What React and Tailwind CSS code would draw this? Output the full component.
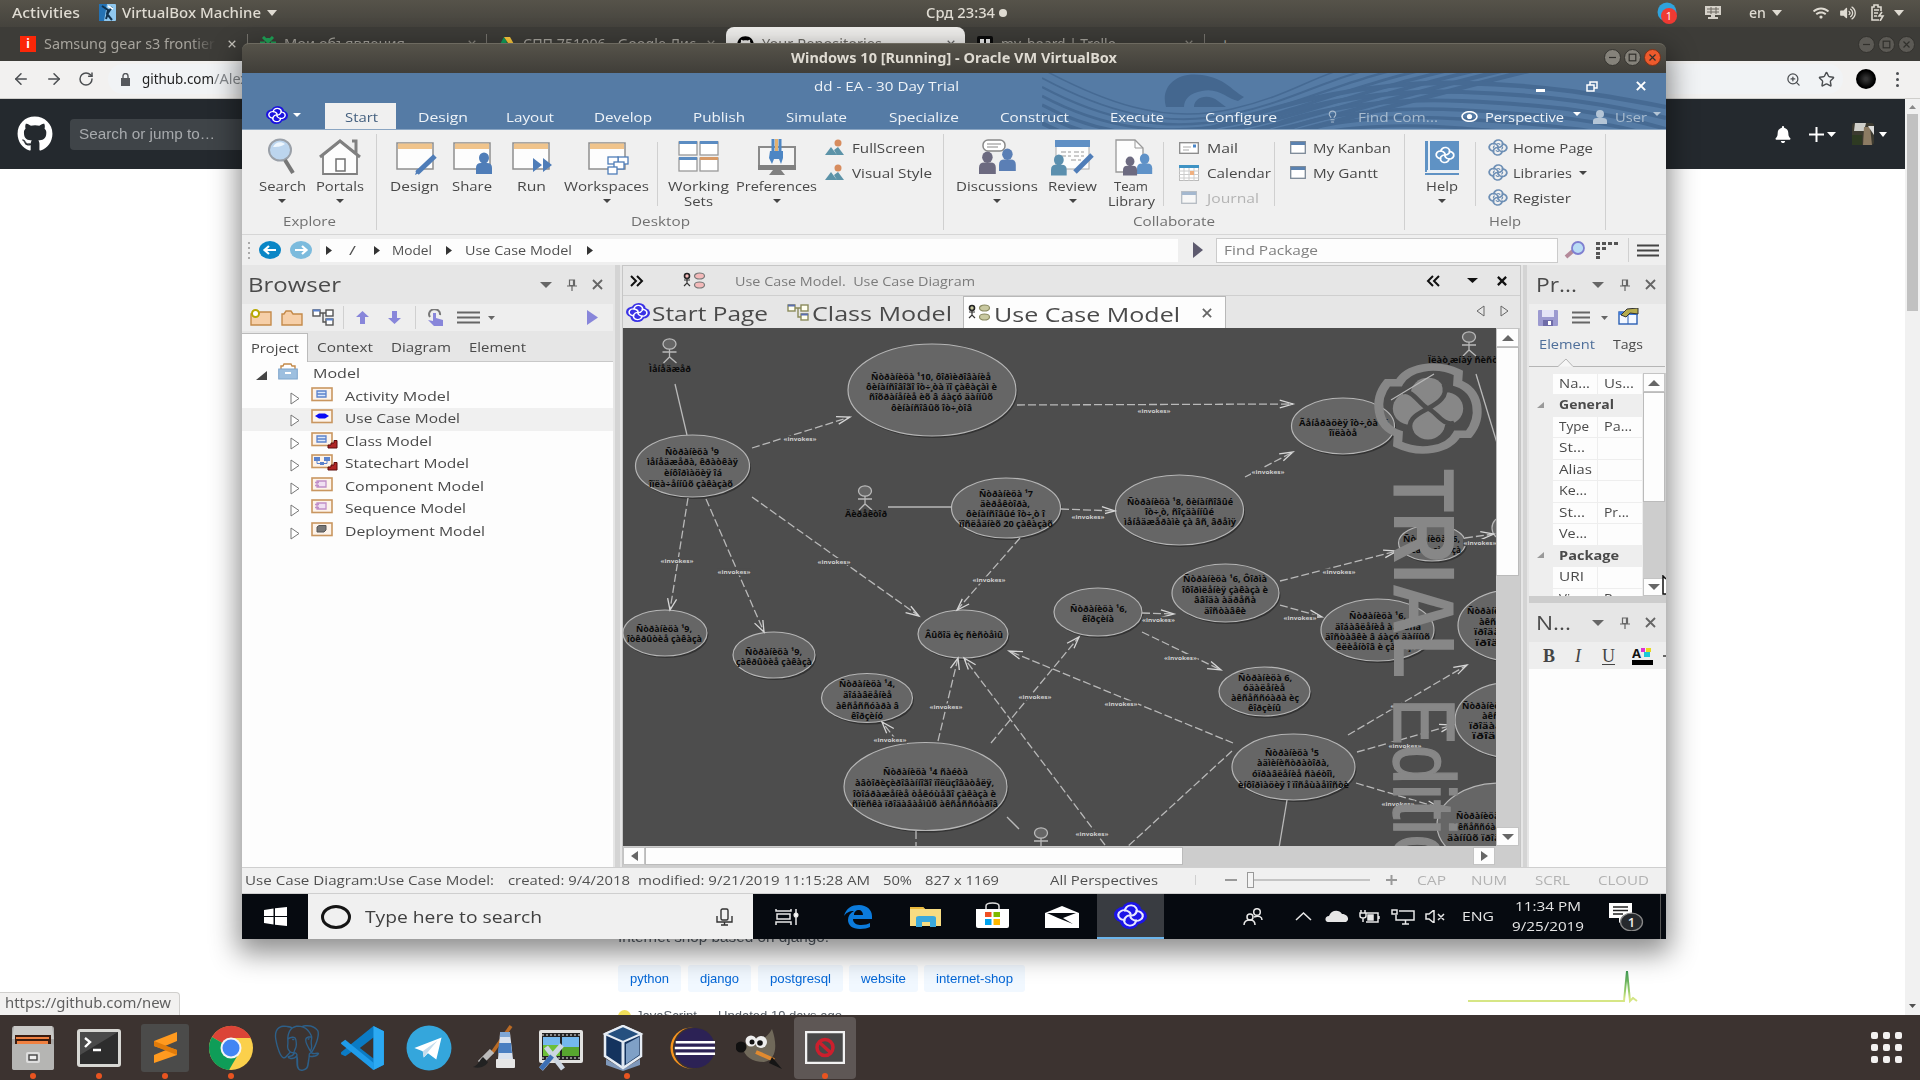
import React, { useLayoutEffect, useRef } from "react";
import { FaGithub, FaBell, FaWifi, FaVolumeUp } from "react-icons/fa";
import { SiPostgresql } from "react-icons/si";
import { ArrowLeft, ArrowRight, RotateCw, Star, ZoomIn, Lightbulb } from "lucide-react";

/* Text stretched or condensed horizontally to an exact width. */
function Fit({ w, className = "", children }) {
  const ref = useRef(null);
  useLayoutEffect(() => {
    const el = ref.current;
    el.style.transform = "none";
    const natural = el.getBoundingClientRect().width;
    if (natural > 0) el.style.transform = `scaleX(${w / natural})`;
  }, [w, children]);
  return (
    <span className={"block shrink-0 whitespace-pre " + className} style={{ width: w }}>
      <span ref={ref} className="inline-block origin-left whitespace-pre">{children}</span>
    </span>
  );
}

function Tri({ dir = "down", w = 9, h = 5, fill = "#444", stroke = "none", className = "" }) {
  const d = {
    down: "M0 0H10L5 10Z",
    up: "M0 10H10L5 0Z",
    right: "M0 0V10L10 5Z",
    left: "M10 0V10L0 5Z",
    corner: "M10 0V10H0Z",
  }[dir];
  return (
    <svg width={w} height={h} viewBox="0 0 10 10" preserveAspectRatio="none" className={"shrink-0 overflow-visible " + className}>
      <path d={d} fill={fill} stroke={stroke} vectorEffect="non-scaling-stroke" />
    </svg>
  );
}

const quarter = [0, 90, 180, 270];
function Knot({ size = 22, h, color = "#1a12e0", inner = "#fff", className = "" }) {
  return (
    <svg width={size} height={h || size} viewBox="-50 -50 100 100" preserveAspectRatio="none" className={"shrink-0 " + className}>
      <g fill={color}>
        {quarter.map((a) => <circle key={a} r="29" cx="3" cy="-21" transform={`rotate(${a})`} />)}
      </g>
      <g fill="none" stroke={inner} strokeWidth="6.500">
        {quarter.map((a) => <path key={a} transform={`rotate(${a})`} d="M-16 -15A18 18 0 1 1 18 -12C14 -4 8 2 0 0" />)}
      </g>
    </svg>
  );
}

function LineKnot({ className = "" }) {
  return (
    <svg width="20" height="17" viewBox="-50 -50 100 100" preserveAspectRatio="none" className={"shrink-0 " + className}>
      <g fill="none" stroke="#6d8fb5" strokeWidth="9">
        {quarter.map((a) => <path key={a} transform={`rotate(${a})`} d="M-20 -18A22 22 0 1 1 20 -10C14 -2 8 2 0 0" />)}
        {quarter.map((a) => <path key={a} transform={`rotate(${a})`} d="M-4 -22A10 9 0 0 1 10 -16" strokeWidth="6" />)}
      </g>
    </svg>
  );
}

function WinBtn({ kind, dim }) {
  const bg = kind === "x" && !dim ? "bg-[#ee5a2c] border-[#7c3117]" : dim ? "bg-[#5c5a55] border-[#33322e]" : "bg-[#85827a] border-[#35342f]";
  return (
    <div className={"h-[17px] w-[17px] shrink-0 rounded-full border flex items-center justify-center " + bg}>
      <svg width="9" height="9" viewBox="0 0 9 9" fill="none" stroke="#31302c" strokeWidth="1.2">
        {kind === "-" && <path d="M1 4.5H8" />}
        {kind === "o" && <rect x="1.2" y="1.2" width="6.6" height="6.6" />}
        {kind === "x" && <path d="M1.5 1.5L7.5 7.5M7.5 1.5L1.5 7.5" />}
      </svg>
    </div>
  );
}

const X = ({ s = 9, c = "#555", sw = 1.8, className = "" }) => (
  <svg width={s} height={s} viewBox="0 0 9 9" fill="none" stroke={c} strokeWidth={sw} className={"shrink-0 " + className}>
    <path d="M.8 .8L8.2 8.2M8.2 .8L.8 8.2" />
  </svg>
);
const Pin = ({ className = "" }) => (
  <svg width="10" height="12" viewBox="0 0 10 12" fill="none" stroke="#666" strokeWidth="1.2" className={"shrink-0 " + className}>
    <path d="M2.5 1H7.5V6.5H2.5ZM6.5 1V6.5M0 7H10M5 7V12" />
  </svg>
);
const Burger = ({ w = 22, c = "#555", className = "" }) => (
  <svg width={w} height="13" viewBox="0 0 22 13" preserveAspectRatio="none" className={"shrink-0 " + className}>
    <path d="M0 1.5H22M0 6.5H22M0 11.5H22" stroke={c} strokeWidth="2" />
  </svg>
);
const VLine = ({ className = "" }) => <div className={"w-px shrink-0 bg-[#d0d0d0] " + className} />;

/* ------------------------------ desktop ------------------------------ */
function TopBar() {
  return (
    <div className="flex h-[27px] shrink-0 items-center bg-linear-to-b from-[#56534a] to-[#45433d] pb-[2px] font-['Noto_Sans',sans-serif] text-[14px] leading-[20px] font-medium text-[#dfdbd2]">
      <Fit w={68} className="ml-[12px]">Activities</Fit>
      <svg width="17" height="17" viewBox="0 0 17 17" className="ml-[19px] shrink-0">
        <rect width="17" height="17" rx="1" fill="#8fc7ee" />
        <path d="M0 0H8L5 17H0Z" fill="#2472b4" /><path d="M3 2L9 6L8 10L13 16M13 3L9 9L7 15" stroke="#10324f" strokeWidth="2" fill="none" />
        <path d="M9 2L14 5" stroke="#fff" strokeWidth="1.5" />
      </svg>
      <Fit w={139} className="ml-[6px]">VirtualBox Machine</Fit>
      <Tri className="ml-[6px]" w={10} h={6} fill="#dfdbd2" />
      <Fit w={69} className="ml-[649px]">Срд 23:34</Fit>
      <div className="ml-[4px] h-[8px] w-[8px] shrink-0 rounded-full bg-[#dfdbd2]" />
      <svg width="22" height="22" viewBox="0 0 22 22" className="ml-[650px] shrink-0">
        <circle cx="10" cy="10" r="9.5" fill="#2fa3dd" /><circle cx="12" cy="14" r="8" fill="#ef3a33" />
        <text x="12" y="18" fontSize="11" textAnchor="middle" fill="#fff" fontFamily="Open Sans">1</text>
      </svg>
      <svg width="16" height="13" viewBox="0 0 16 13" className="ml-[26px] shrink-0">
        <path d="M0 0H16V9H0ZM6 9H10V11H13V13H3V11H6Z" fill="#d5d1c9" /><path d="M2 3H14M2 6H14M6 1V8M11 1V8" stroke="#6a675f" />
      </svg>
      <Fit w={17} className="ml-[28px]">en</Fit>
      <Tri className="ml-[6px]" w={10} h={6} fill="#dfdbd2" />
      <FaWifi className="ml-[31px] h-[14px] w-[16px] shrink-0" />
      <FaVolumeUp className="ml-[11px] h-[14px] w-[16px] shrink-0" />
      <svg width="15" height="17" viewBox="0 0 15 17" className="ml-[14px] shrink-0" fill="none" stroke="#dfdbd2" strokeWidth="1.6">
        <path d="M9 16H2V3H4V1H8V3H11V7" /><path d="M4 6H9M4 9H8M4 12H7" /><path d="M12 8L9 12H13L10 17" />
      </svg>
      <Tri className="ml-[9px]" w={10} h={6} fill="#dfdbd2" />
    </div>
  );
}

function TabStrip() {
  return (
    <div className="flex h-[34px] shrink-0 items-center bg-[#3d3c38] font-['Noto_Sans',sans-serif] text-[13.5px] leading-[20px] text-[#a7a49d]">
      <div className="ml-[20px] flex h-[16px] w-[16px] shrink-0 items-center justify-center bg-[#fb2708] text-[12px] font-bold text-white">i</div>
      <div className="ml-[8px] w-[172px] shrink-0 overflow-hidden mask-r-from-85% mask-r-to-100%"><Fit w={171}>Samsung gear s3 frontier</Fit></div>
      <X s={8} c="#c6c3bc" sw={1.4} className="ml-[12px]" />
      <VLine className="ml-[11px] h-[20px] bg-[#77746e]!" />
      <svg width="16" height="16" viewBox="0 0 16 16" className="ml-[12px] shrink-0"><path d="M3 1L8 6L13 1M0 7H5M11 7H16M8 2V14M3 13L8 8L13 13" stroke="#1fa558" strokeWidth="3" fill="none" /></svg>
      <Fit w={121} className="ml-[8px]">Мои объявления</Fit>
      <X s={8} c="#8a877f" sw={1.4} className="ml-[63px]" />
      <VLine className="ml-[10px] h-[20px] bg-[#77746e]!" />
      <svg width="16" height="15" viewBox="0 0 16 15" className="ml-[12px] shrink-0"><path d="M5 0L0 9L3 14L8 5Z" fill="#12a05c" /><path d="M5 0H11L16 9H11Z" fill="#fdc93c" /><path d="M3 14L5.5 9H16L13 14Z" fill="#4a87ee" /></svg>
      <Fit w={173} className="ml-[8px]">СПП 751006 - Google Дис</Fit>
      <X s={8} c="#8a877f" sw={1.4} className="ml-[11px]" />
      <div className="ml-[11px] flex h-full w-[239px] shrink-0 items-center rounded-t-[8px] bg-[#f0efed] text-[#6d6b66]">
        <FaGithub className="ml-[11px] h-[17px] w-[17px] shrink-0 text-black" />
        <Fit w={120} className="ml-[8px]">Your Repositories</Fit>
        <X s={8} c="#666" sw={1.4} className="ml-[65px]" />
      </div>
      <svg width="16" height="16" viewBox="0 0 16 16" className="ml-[12px] shrink-0"><rect width="16" height="16" rx="2" fill="#0a0a0a" /><path d="M3 3H7V13H3ZM9 3H13V9H9Z" fill="#eee" /></svg>
      <Fit w={115} className="ml-[8px]">my_board | Trello</Fit>
      <X s={8} c="#8a877f" sw={1.4} className="ml-[69px]" />
      <VLine className="ml-[11px] h-[20px] bg-[#77746e]!" />
      <span className="ml-[15px] text-[18px]">+</span>
      <div className="ml-auto flex gap-[3px] pr-[5px]"><WinBtn kind="-" dim /><WinBtn kind="o" dim /><WinBtn kind="x" dim /></div>
    </div>
  );
}

function AddressBar() {
  return (
    <div className="flex h-[38px] shrink-0 items-center border-b border-[#cfcecb] bg-[#f2f1f0] pb-px text-[#4b4e51]">
      <ArrowLeft size={18} strokeWidth={2} className="ml-[12px] shrink-0" />
      <ArrowRight size={18} strokeWidth={2} className="ml-[15px] shrink-0" />
      <RotateCw size={16} strokeWidth={2.2} className="ml-[15px] shrink-0" />
      <div className="ml-[14px] flex h-[30px] w-[1735px] shrink-0 items-center rounded-full bg-[#f1f3f5] font-['Noto_Sans',sans-serif] text-[14px] leading-[20px]">
        <svg width="9" height="13" viewBox="0 0 9 13" className="ml-[13px] shrink-0"><path d="M0 5H9V13H0Z" fill="#55585c" /><path d="M2 6V3A2.5 2.5 0 0 1 7 3V6" fill="none" stroke="#55585c" strokeWidth="1.4" /></svg>
        <Fit w={72} className="ml-[12px] text-[#222]">github.com</Fit>
        <Fit w={34} className="text-[#85888c]">/Alex</Fit>
        <ZoomIn size={15} className="mr-[17px] ml-auto" />
        <Star size={17} className="mr-[8px]" />
      </div>
      <div className="ml-[13px] h-[20px] w-[20px] shrink-0 rounded-full bg-[radial-gradient(circle,#333_10%,#000_60%)]" />
      <div className="ml-[20px] flex flex-col gap-[3px]">
        <i className="block h-[3px] w-[3px] rounded-full bg-[#4b4e51]" /><i className="block h-[3px] w-[3px] rounded-full bg-[#4b4e51]" /><i className="block h-[3px] w-[3px] rounded-full bg-[#4b4e51]" />
      </div>
    </div>
  );
}

function GithubPage() {
  return (
    <div className="flex h-[916px] shrink-0">
      <div className="flex w-[1905px] flex-col bg-white">
        <div className="flex h-[70px] shrink-0 items-center bg-[#24292e]">
          <FaGithub className="ml-[17px] h-[36px] w-[36px] shrink-0 text-white" />
          <div className="ml-[17px] flex h-[31px] w-[300px] shrink-0 items-center rounded-[4px] bg-[#3f4448] font-['Liberation_Sans',sans-serif] text-[15px] text-[#a7aaad]">
            <Fit w={136} className="ml-[9px]">Search or jump to…</Fit>
          </div>
          <FaBell className="ml-auto h-[17px] w-[16px] text-white" />
          <svg width="15" height="15" viewBox="0 0 15 15" className="ml-[18px]"><path d="M7.5 0V15M0 7.5H15" stroke="#fff" strokeWidth="2" /></svg>
          <Tri className="ml-[3px]" w={9} h={5} fill="#fff" />
          <svg width="22" height="22" viewBox="0 0 22 22" className="ml-[16px]"><rect width="22" height="22" rx="3" fill="#3c3a30" /><path d="M3 0H14L12 8H2Z" fill="#cfcfca" /><path d="M12 4H18L20 22H11Z" fill="#8c7b63" /><path d="M0 12H10V22H0Z" fill="#2e3a22" /><path d="M16 3H22V12Z" fill="#ddd" /></svg>
          <Tri className="mr-[18px] ml-[5px]" w={8} h={5} fill="#fff" />
        </div>
        <div className="mt-[758px] flex h-[20px] shrink-0 items-center pl-[618px] font-['Liberation_Sans',sans-serif] text-[14px] text-[#586069]">
          <Fit w={211}>Internet shop based on django.</Fit>
        </div>
        <div className="mt-[18px] flex h-[27px] shrink-0 items-center pl-[618px] font-['Liberation_Sans',sans-serif] text-[13px] text-[#0366d6]">
          {[["python", 63, 39, ""], ["django", 63, 39, "ml-[7px]"], ["postgresql", 85, 61, "ml-[7px]"], ["website", 69, 45, "ml-[6px]"], ["internet-shop", 101, 77, "ml-[6px]"]].map(([t, w, tw, m]) => (
            <div key={t} className={"flex h-[27px] items-center justify-center rounded-[3px] bg-[#f1f8ff] " + m} style={{ width: w }}><Fit w={tw}>{t}</Fit></div>
          ))}
          <svg width="170" height="36" viewBox="0 0 170 36" className="ml-[443px] shrink-0 translate-y-[7px]">
            <defs><linearGradient id="spark" gradientUnits="userSpaceOnUse" x1="0" y1="34" x2="0" y2="2"><stop offset="0.1" stopColor="#d6e685" /><stop offset="0.4" stopColor="#8cc665" /><stop offset="1" stopColor="#3d9a55" /></linearGradient></defs>
            <path d="M0 33.010H156L159 3L162 33L165 30L169 33" fill="none" stroke="url(#spark)" strokeWidth="2" />
          </svg>
        </div>
        <div className="flex min-h-0 flex-1 overflow-hidden">
          <div className="flex h-[24px] w-[180px] shrink-0 items-center rounded-tr-[4px] border-t border-r border-[#d0cfcd] bg-[#f2f1f0] pb-[4px] font-['Noto_Sans',sans-serif] text-[14px] leading-[18px] text-[#5f5f5f]"><Fit w={166} className="ml-[5px]">https://github.com/new</Fit></div>
          <div className="mt-[16px] ml-[438px] flex h-[16px] items-center font-['Liberation_Sans',sans-serif] text-[13px] leading-[16px] text-[#586069]">
            <i className="block h-[13px] w-[13px] shrink-0 rounded-full bg-[#f1e05a]" />
            <Fit w={61} className="ml-[5px]">JavaScript</Fit>
            <Fit w={124} className="ml-[21px]">Updated 19 days ago</Fit>
          </div>
        </div>
      </div>
      <div className="flex w-[15px] flex-col items-center bg-[#f1f1f1]">
        <Tri dir="up" w={7} h={4} fill="#8a8a8a" className="mt-[6px]" />
        <div className="mt-[5px] h-[197px] w-[11px] bg-[#c1c1c1]" />
        <Tri w={7} h={4} fill="#505050" className="mt-auto mb-[7px]" />
      </div>
    </div>
  );
}

/* ------------------------------ dock ------------------------------ */
const dockIcons = [
  <svg key="files" viewBox="0 0 44 46"><rect x="1" y="1" width="42" height="44" rx="3" fill="#a9a9a7" /><path d="M3 1H41L43 14H1Z" fill="#c9c9c7" /><rect x="4" y="10" width="36" height="9" fill="#3a1c10" /><path d="M5 12H38V14H5ZM6 16H37V19H6Z" fill="#f08040" /><rect x="1" y="19" width="42" height="26" rx="2" fill="#b5b5b3" /><rect x="15" y="27" width="14" height="11" rx="2" fill="#ddd" /><rect x="18" y="30" width="8" height="5" fill="#eee" stroke="#444" strokeWidth="1.4" /></svg>,
  <svg key="term" viewBox="0 0 46 42"><rect x="1" y="2" width="44" height="38" rx="3" fill="#d8d8d4" /><rect x="4" y="5" width="38" height="32" fill="#2d2d2d" /><path d="M4 5H42L4 28Z" fill="#4a4a4a" /><path d="M9 11L14 15L9 20M17 23H25" stroke="#fff" strokeWidth="2.4" fill="none" /></svg>,
  <div key="subl" className="flex h-[48px] w-[48px] items-center justify-center rounded-[3px] bg-[#4b4b4a]"><svg width="25" height="33" viewBox="0 0 25 33"><path d="M1 10L24 1V10L12 15L24 19V24L1 32V24L13 19L1 15Z" fill="#ff9a1f" /><path d="M1 15L1 10L24 19V24Z" fill="#e07b0a" /></svg></div>,
  <svg key="chrome" viewBox="0 0 46 46"><circle cx="23" cy="23" r="22" fill="#fbd04b" /><path d="M23 23L4 12A22 22 0 0 1 43 13H23Z" fill="#db4437" /><path d="M23 23L4 12A22 22 0 0 0 21 45L31 28Z" fill="#0f9d58" /><circle cx="23" cy="23" r="10.500" fill="#f5f5f5" /><circle cx="23" cy="23" r="8.500" fill="#4285f4" /></svg>,
  <SiPostgresql key="pg" className="text-[#2d5f88]" />,
  <svg key="code" viewBox="0 0 44 44"><path d="M32 1L42 6V38L32 43L12 25L5 30L1 28V26L32 1Z" fill="#0b7bc4" /><path d="M1 17L5 14L32 36V43L1 18Z" fill="#1f9cea" /><path d="M32 12V32L19 22Z" fill="#3c3330" /><path d="M32 1L42 6V38L32 43Z" fill="#2ca9f2" /></svg>,
  <svg key="tg" viewBox="0 0 44 44"><circle cx="22" cy="22" r="21.500" fill="#34a6dc" /><path d="M8 22L34 12L29 33L21 27L17 31L16 25Z" fill="#fff" /><path d="M16 25L30 15L20 27L17 31Z" fill="#c4dcec" /></svg>,
  <svg key="paint" viewBox="0 0 46 46"><path d="M39 1L20 28" stroke="#b96a24" strokeWidth="3.500" /><path d="M20 26L8 38" stroke="#bbb" strokeWidth="6" /><path d="M11 32C8 34 6 41 1 42C8 44 14 41 16 37Z" fill="#222" /><path d="M28 8H38L41 34H26Z" fill="#d9e2ee" /><path d="M27 18H39L40 28H26Z" fill="#4a7fc1" /><rect x="24" y="34" width="19" height="9" rx="1" fill="#e6e6e6" /><path d="M28 7H38V12H28Z" fill="#7fa6d4" /></svg>,
  <svg key="edit" viewBox="0 0 46 46"><rect x="1" y="5" width="44" height="33" rx="2" fill="#e2e2e0" /><rect x="4" y="8" width="38" height="27" fill="#222" /><path d="M5 12H22V31H5Z" fill="#6cbf38" /><path d="M24 12H41V31H24Z" fill="#57a62f" /><path d="M5 12H22V20H5ZM24 12H41V22H24Z" fill="#74b8ee" /><path d="M4 10H42M4 33H42" stroke="#eee" strokeDasharray="2 2" /><path d="M3 44L24 20M8 22L25 44" stroke="#ccd6e2" strokeWidth="5" /><path d="M3 44L14 31" stroke="#3c6fb4" strokeWidth="5" /></svg>,
  <svg key="vbox" viewBox="0 0 42 46" className="-translate-x-[4px]"><path d="M4 34L21 44L38 34V40L21 46L4 40Z" fill="#7f98ba" /><path d="M21 1L39 9V31L21 43L3 31V9Z" fill="#14335e" stroke="#e6edf5" strokeWidth="2.500" /><path d="M3 9L21 17L39 9L21 1Z" fill="#25507f" stroke="#e6edf5" strokeWidth="2" /><path d="M21 17V43" stroke="#dfe8f2" strokeWidth="3" /><path d="M24 19L37 12V30L24 39Z" fill="#7fa0c6" /></svg>,
  <svg key="ecl" viewBox="0 0 48 46"><circle cx="22" cy="23" r="21.500" fill="#f7941e" /><circle cx="25" cy="23" r="22" fill="#3c3330" /><circle cx="26" cy="23" r="21" fill="#2c2255" /><path d="M6 17H47M5 23H47M6 29H47" stroke="#fff" strokeWidth="2.600" /></svg>,
  <svg key="gimp" viewBox="0 0 46 44"><path d="M12 14C20 18 30 14 36 3C42 20 40 34 28 36C16 36 8 30 7 22Z" fill="#70695a" /><circle cx="5" cy="21" r="5.500" fill="#111" /><circle cx="15" cy="15" r="5.500" fill="#eee" /><circle cx="25" cy="16" r="6" fill="#eee" /><circle cx="16" cy="16" r="2.500" fill="#111" /><circle cx="24" cy="17" r="2.800" fill="#111" /><path d="M20 26L38 34" stroke="#e08a30" strokeWidth="4" /><path d="M36 31L46 43L33 37Z" fill="#151515" /></svg>,
  <div key="no" className="flex h-[62px] w-[62px] shrink-0 items-center justify-center rounded-[4px] bg-[#5e5755]"><svg width="40" height="33" viewBox="0 0 40 33"><rect x="1" y="1" width="38" height="31" fill="#484848" stroke="#f2f2f2" strokeWidth="2.500" /><circle cx="20" cy="16.500" r="8" fill="none" stroke="#cc1f2d" strokeWidth="3.500" /><path d="M14 11L26 22" stroke="#cc1f2d" strokeWidth="3.500" /></svg></div>,
];
const running = [0, 1, 2, 3, 9, 12];
function Dock() {
  return (
    <div className="flex h-[65px] shrink-0 items-center bg-[#3c3330]">
      {dockIcons.map((ic, i) => (
        <div key={i} className="relative flex h-[65px] w-[66px] shrink-0 items-center justify-center [&>svg]:h-[46px] [&>svg]:w-[46px]">
          {ic}
          {running.includes(i) && <i className="absolute bottom-[1px] left-[30px] block h-[6px] w-[6px] rounded-full bg-[#e95420]" />}
        </div>
      ))}
      <div className="mr-[18px] ml-auto grid grid-cols-3 gap-[5px]">
        {[0, 1, 2, 3, 4, 5, 6, 7, 8].map((i) => <i key={i} className="block h-[7px] w-[7px] rounded-[2px] bg-[#f3f1f0]" />)}
      </div>
    </div>
  );
}

/* ------------------------------ EA header ------------------------------ */
function Swirls() {
  return (
    <svg className="absolute top-0 right-0" width="624" height="57" viewBox="0 0 624 57">
      <g fill="none" stroke="#466a93">
        {[0, 1, 2, 3, 4, 5, 6, 7].map((i) => (
          <path key={i} strokeWidth={1.5 + i * 0.45} d={`M0 ${-4 + i * 9}C60 ${28 + i * 9} 120 ${52 + i * 4} 190 ${36 + i * 5}S${280 + i * 18} ${-6 + i * 3} ${330 + i * 26} -8`} />
        ))}
        {[0, 1, 2, 3, 4, 5].map((i) => (
          <path key={"b" + i} strokeWidth={4.5 - i * 0.3} d={`M${150 + i * 30} ${62}C250 ${26 + i * 7} 330 ${8 + i * 8} 420 ${10 + i * 9}S570 ${24 + i * 8} 624 ${34 + i * 11}`} />
        ))}
      </g>
      <path d="M124 34C118 14 134 -2 160 2C184 6 188 16 202 24L196 28C186 26 176 14 160 18C148 20 142 26 142 34ZM152 34C152 24 166 20 176 28L184 34Z" fill="#44678f" />
    </svg>
  );
}
const menuTabs = [["Design", 50, "ml-[22px]"], ["Layout", 48, "ml-[38px]"], ["Develop", 58, "ml-[40px]"], ["Publish", 52, "ml-[41px]"], ["Simulate", 61, "ml-[41px]"], ["Specialize", 70, "ml-[42px]"], ["Construct", 69, "ml-[41px]"], ["Execute", 54, "ml-[41px]"], ["Configure", 72, "ml-[41px]"]];
function AppHeader() {
  return (
    <div className="relative h-[57px] shrink-0 overflow-hidden border-b border-[#8aa5c2] bg-[#557ba5] text-[13px] leading-[18px] text-[#eef3f8]">
      <Swirls />
      <div className="relative flex h-[30px] items-center">
        <Fit w={145} className="ml-[572px] -translate-y-[2px]">dd - EA - 30 Day Trial</Fit>
        <div className="mt-[4px] ml-[577px] h-[3px] w-[9px] shrink-0 bg-white" />
        <svg width="12" height="11" viewBox="0 0 12 11" className="mb-[4px] ml-[41px] shrink-0" fill="none" stroke="#fff" strokeWidth="1.5"><path d="M1 4H8V10H1ZM4 4V1H11V7H8" /></svg>
        <X s={10} c="#fff" className="mb-[4px] ml-[38px]" />
      </div>
      <div className="relative flex h-[27px] items-center">
        <Knot size={22} h={18} className="mb-[4px] ml-[24px]" />
        <Tri className="mb-[4px] ml-[5px]" w={8} h={4} fill="#fff" />
        <div className="ml-[24px] flex h-[27px] w-[71px] shrink-0 items-center justify-center bg-[#f0f0f0] pl-[2px] text-[#44607f]"><Fit w={33}>Start</Fit></div>
        {menuTabs.map(([t, w, m]) => <Fit key={t} w={w} className={m}>{t}</Fit>)}
        <Lightbulb className="ml-[49px] h-[15px] w-[13px] shrink-0 text-[#a9bccf]" />
        <Fit w={80} className="ml-[19px] text-[#a9bccf]">Find Com...</Fit>
        <svg width="17" height="11" viewBox="0 0 17 11" className="ml-[23px] shrink-0"><ellipse cx="8.500" cy="5.500" rx="7.500" ry="4.800" fill="none" stroke="#fff" strokeWidth="1.600" /><circle cx="8.500" cy="5.500" r="2.600" fill="#fff" /></svg>
        <Fit w={79} className="ml-[7px]">Perspective</Fit>
        <Tri className="mb-[6px] ml-[9px]" w={8} h={4} fill="#fff" />
        <svg width="16" height="14" viewBox="0 0 16 14" className="ml-[11px] shrink-0" fill="#b4c5d6"><circle cx="8" cy="4" r="4" /><path d="M1 14V11Q1 8 5 8H11Q15 8 15 11V14Z" /></svg>
        <Fit w={32} className="ml-[7px] text-[#a9bccf]">User</Fit>
        <Tri className="mb-[6px] ml-[6px]" w={8} h={4} fill="#b4c5d6" />
      </div>
    </div>
  );
}

/* ------------------------------ ribbon ------------------------------ */
const Person = ({ x, y, c, s = 1 }) => (
  <g transform={`translate(${x} ${y}) scale(${s})`} fill={c}><ellipse cx="8" cy="5" rx="5" ry="5.500" /><path d="M0 21V15Q0 10 5 10H11Q16 10 16 15V21Z" /></g>
);
const WinFrame = ({ children }) => (
  <svg width="44" height="36" viewBox="0 0 44 36" className="translate-x-[2px]"><rect x="2" y="4" width="36" height="26" fill="#fdfdfd" stroke="#8e8e8e" strokeWidth="1.500" /><path d="M3 4.500H37V10H3Z" fill="#f0c48c" />{children}</svg>
);
const B = "#4f7db8";
const icons = {
  search: <svg width="30" height="38" viewBox="0 0 30 38"><ellipse cx="13" cy="12" rx="11" ry="10.500" fill="#bcd5ee" stroke="#9aa0a8" strokeWidth="2" /><path d="M6 9C8 4 14 3 18 6C14 9 9 9 6 9Z" fill="#eef6fd" /><path d="M18 22L26 35" stroke="#777" strokeWidth="4" /></svg>,
  house: <svg width="42" height="38" viewBox="0 0 42 38"><path d="M4 17V36H38V17L21 3Z" fill="#fdfdfd" stroke="#808080" strokeWidth="1.800" /><path d="M1 19L21 3L41 19M33 3H37V15" fill="none" stroke="#808080" strokeWidth="3" /><rect x="17" y="21" width="9" height="12" fill="#fff" stroke="#707070" strokeWidth="1.500" /></svg>,
  design: <WinFrame><path d="M22 34L40 17" stroke={B} strokeWidth="5" /><path d="M20 36L22 30L26 33Z" fill={B} /></WinFrame>,
  share: <WinFrame><Person x="24" y="14" c={B} /></WinFrame>,
  run: <WinFrame><path d="M22 19L31 26L22 33ZM32 19L41 26L32 33Z" fill={B} /></WinFrame>,
  workspaces: <WinFrame><g fill="#fff" stroke={B} strokeWidth="1.300"><rect x="31" y="18" width="10" height="7" /><rect x="21" y="18" width="10" height="7" /><rect x="27" y="23" width="10" height="7" /><rect x="21" y="28" width="9" height="7" /></g></WinFrame>,
  sets: <svg width="42" height="34" viewBox="0 0 42 34">{[[1, 1, "#5b8cc2"], [22, 1, "#5b8cc2"], [1, 17, "#5b8cc2"], [22, 17, "#d89a66"]].map(([x, y, c]) => <g key={x + "-" + y}><rect x={x} y={y + 1} width="18" height="13" fill="#fff" stroke="#999" strokeWidth="1.300" /><path d={`M${x} ${y}h18v3h-18z`} fill={c} /></g>)}</svg>,
  prefs: <svg width="42" height="38" viewBox="0 0 42 38"><rect x="3" y="9" width="36" height="21" fill="#f5f5f5" stroke="#8a8a8a" strokeWidth="2" /><path d="M2 27H40V32H2Z" fill="#808080" /><path d="M17 32H25L29 37H13Z" fill="#808080" /><path d="M17 1V15M24 1V15" stroke="#4d86c4" strokeWidth="3" /><path d="M20.500 1V14" stroke="#e2b070" strokeWidth="3" /><path d="M14 13H27V20L25 26L23 21H18L16 26L13 20Z" fill="#4d86c4" /></svg>,
  discuss: <svg width="40" height="38" viewBox="0 0 40 38"><rect x="6" y="2" width="22" height="11" rx="5" fill="#fff" stroke="#888" strokeWidth="1.500" /><path d="M10 6H24M10 9H21" stroke="#888" /><Person x="22" y="11" c="#5b7fb5" s={1.05} /><Person x="2" y="14" c="#6c6a80" s={1.05} /></svg>,
  review: <svg width="46" height="38" viewBox="0 0 46 38" className="-translate-x-px"><rect x="7" y="3" width="33" height="28" fill="#fdfdfd" stroke="#aaa" /><path d="M6 2H41V9H6Z" fill="#5f8fc4" /><path d="M12 14H22M25 14H35M12 18H22M25 18H35M22 22H32" stroke="#999" strokeDasharray="5 2" /><Person x="2" y="17" c="#5b8fae" s={0.98} /><path d="M26 34L43 17" stroke={B} strokeWidth="5" /></svg>,
  team: <svg width="40" height="38" viewBox="0 0 40 38" className="translate-x-[3px]"><path d="M2 2H21L29 10V34H2Z" fill="#fdfdfd" stroke="#999" strokeWidth="1.300" /><path d="M21 2V10H29" fill="none" stroke="#999" /><Person x="23" y="16" c="#5f92c8" s={0.95} /><Person x="9" y="19" c="#6c6a80" s={0.88} /></svg>,
  help: <svg width="36" height="36" viewBox="0 0 36 36" className="translate-y-px"><path d="M1 1H35V32H1Z" fill="#5f92c4" /><path d="M5 1V30M3 31H35" stroke="#e9f0f7" strokeWidth="2" /><path d="M1 34H35" stroke="#5f92c4" strokeWidth="2" /><g transform="translate(21 15) scale(.2 .17)" fill="none" stroke="#fff" strokeWidth="9">{quarter.map((a) => <path key={a} transform={`rotate(${a})`} d="M-20 -18A22 22 0 1 1 20 -10C14 -2 8 2 0 0" />)}</g></svg>,
};
function Big({ icon, label, w, arrow, second, className = "" }) {
  return (
    <div className={"flex shrink-0 flex-col items-center " + className}>
      <div className="flex h-[49px] items-center justify-center pt-[4px]">{icons[icon]}</div>
      <Fit w={w} className="h-[15px]">{label}</Fit>
      <div className="flex h-[14px] items-center">{arrow && <Tri w={8} h={4} />}{second && <Fit w={second[1]}>{second[0]}</Fit>}</div>
    </div>
  );
}
const Pic = () => <svg width="20" height="17" viewBox="0 0 20 17" className="shrink-0"><circle cx="13" cy="4" r="3.500" fill="#d78c5e" /><path d="M0 16L6 8L12 16ZM9 11L13 8L19 16H12Z" fill="#5c93a8" /></svg>;
const Mini = ({ faint }) => <svg width="16" height="13" viewBox="0 0 16 13" className={"shrink-0 " + (faint ? "opacity-50" : "")}><rect x=".7" y=".7" width="14.600" height="11.600" fill="#fff" stroke="#7a8796" strokeWidth="1.300" /><path d="M1 1H15V4H1Z" fill="#5b82b0" /></svg>;
const MailI = () => <svg width="20" height="12" viewBox="0 0 20 12" className="shrink-0"><rect x=".7" y=".7" width="18.600" height="10.600" fill="#fff" stroke="#888" strokeWidth="1.300" /><path d="M4 5H12M4 8H10" stroke="#aaa" /><path d="M14 2.500H17V5.500H14Z" fill="#4a86c8" /></svg>;
const Cal = () => <svg width="20" height="16" viewBox="0 0 20 16" className="shrink-0"><rect x=".5" y=".5" width="19" height="15" fill="#fff" stroke="#bbb" /><path d="M0 0H20V3H0Z" fill="#3f93c4" /><path d="M0 6H20M0 9.500H20M0 13H20M5 3V16M10 3V16M15 3V16" stroke="#ccc" /><path d="M11 6H15V10H11Z" fill="#f0b080" /></svg>;
function Row({ icon, label, w, iw, arrow, className = "" }) {
  return (
    <div className={"flex h-[25px] items-center " + className}>
      <div className={"flex shrink-0 " + iw}>{icon}</div>
      <Fit w={w}>{label}</Fit>
      {arrow && <Tri className="ml-[7px]" w={8} h={4} />}
    </div>
  );
}
function Group({ label, lw, w, children }) {
  return (
    <div className="flex shrink-0" style={{ width: w }}>
      <div className="flex flex-1 flex-col">
        <div className="flex h-[83px]">{children}</div>
        <div className="flex h-[16px] items-center justify-center text-[#707070]"><Fit w={lw}>{label}</Fit></div>
      </div>
      <VLine className="mt-[4px] h-[96px]" />
    </div>
  );
}
function Ribbon() {
  return (
    <div className="flex h-[105px] shrink-0 border-b border-[#d6d6d6] bg-[#f0f0f0] text-[13px] leading-[14px] text-[#484848]">
      <Group label="Explore" lw={53} w={135}>
        <Big icon="search" label="Search" w={47} arrow className="ml-[11px] w-[58px]" />
        <Big icon="house" label="Portals" w={48} arrow className="w-[58px]" />
      </Group>
      <Group label="Desktop" lw={59} w={567}>
        <Big icon="design" label="Design" w={49} className="ml-[9px] w-[57px]" />
        <Big icon="share" label="Share" w={40} className="w-[58px]" />
        <Big icon="run" label="Run" w={29} className="w-[60px]" />
        <Big icon="workspaces" label="Workspaces" w={85} arrow className="w-[91px]" />
        <VLine className="mt-[12px] ml-[5px] h-[64px]" />
        <Big icon="sets" label="Working" w={61} second={["Sets", 29]} className="ml-[6px] w-[69px]" />
        <Big icon="prefs" label="Preferences" w={81} arrow className="w-[87px]" />
        <div className="ml-[5px] pt-[5px]">
          <Row icon={<Pic />} iw="w-[27px]" label="FullScreen" w={73} />
          <Row icon={<Pic />} iw="w-[27px]" label="Visual Style" w={80} />
        </div>
      </Group>
      <Group label="Collaborate" lw={82} w={461}>
        <Big icon="discuss" label="Discussions" w={82} arrow className="ml-[8px] w-[90px]" />
        <Big icon="review" label="Review" w={49} arrow className="w-[61px]" />
        <Big icon="team" label="Team" w={34} second={["Library", 47]} className="w-[56px]" />
        <VLine className="mt-[12px] ml-[4px] h-[64px]" />
        <div className="ml-[15px] w-[95px] pt-[5px]">
          <Row icon={<MailI />} iw="w-[28px]" label="Mail" w={31} />
          <Row icon={<Cal />} iw="w-[28px]" label="Calendar" w={64} />
          <Row icon={<Mini faint />} iw="w-[28px] pl-[2px]" label="Journal" w={52} className="text-[#b4b4b4]" />
        </div>
        <VLine className="mt-[12px] h-[64px]" />
        <div className="ml-[15px] pt-[5px]">
          <Row icon={<Mini />} iw="w-[23px]" label="My Kanban" w={78} />
          <Row icon={<Mini />} iw="w-[23px]" label="My Gantt" w={65} />
        </div>
      </Group>
      <Group label="Help" lw={32} w={201}>
        <Big icon="help" label="Help" w={32} arrow className="ml-[10px] w-[53px]" />
        <VLine className="mt-[12px] ml-[7px] h-[64px]" />
        <div className="ml-[12px] pt-[5px]">
          <Row icon={<LineKnot />} iw="w-[25px]" label="Home Page" w={80} />
          <Row icon={<LineKnot />} iw="w-[25px]" label="Libraries" w={59} arrow />
          <Row icon={<LineKnot />} iw="w-[25px]" label="Register" w={58} />
        </div>
      </Group>
    </div>
  );
}

function NavBar() {
  return (
    <div className="flex h-[30px] shrink-0 items-center bg-[#efefef] text-[13px] leading-[18px] text-[#505050]">
      <div className="ml-[6px] h-[17px] w-[2px] shrink-0 bg-[repeating-linear-gradient(to_bottom,#aaa_0_2px,transparent_2px_5px)]" />
      <svg width="22" height="18" viewBox="0 0 22 18" className="ml-[9px] shrink-0"><ellipse cx="11" cy="9" rx="11" ry="9" fill="#0a86c6" /><path d="M17 9H6M10 5L5.500 9L10 13" stroke="#fff" strokeWidth="2.200" fill="none" /></svg>
      <svg width="22" height="18" viewBox="0 0 22 18" className="ml-[9px] shrink-0"><ellipse cx="11" cy="9" rx="11" ry="9" fill="#7cbbdd" /><path d="M5 9H16M12 5L16.500 9L12 13" stroke="#fff" strokeWidth="2.200" fill="none" /></svg>
      <div className="ml-[8px] flex h-[23px] w-[858px] shrink-0 items-center bg-[#fdfdfd]">
        <Tri dir="right" w={6} h={9} fill="#333" className="ml-[6px]" />
        <Fit w={7} className="ml-[17px]">/</Fit>
        <Tri dir="right" w={6} h={9} fill="#333" className="ml-[18px]" />
        <Fit w={40} className="ml-[12px]">Model</Fit>
        <Tri dir="right" w={6} h={9} fill="#333" className="ml-[14px]" />
        <Fit w={107} className="ml-[13px]">Use Case Model</Fit>
        <Tri dir="right" w={6} h={9} fill="#333" className="ml-[15px]" />
      </div>
      <Tri dir="right" w={10} h={16} fill="#5d5a6e" className="ml-[15px]" />
      <div className="ml-[13px] flex h-[25px] w-[342px] shrink-0 items-center border border-[#cbcbcb] bg-[#fdfdfd] text-[#808080]"><Fit w={94} className="ml-[7px]">Find Package</Fit></div>
      <svg width="22" height="18" viewBox="0 0 22 18" className="ml-[6px] shrink-0"><path d="M2 16L10 9" stroke="#b48a9a" strokeWidth="4" /><circle cx="14" cy="7" r="6" fill="#b9dcf5" stroke="#7f7fd0" strokeWidth="1.800" /></svg>
      <svg width="22" height="18" viewBox="0 0 22 18" className="ml-[10px] shrink-0" fill="#555"><path d="M0 1h4v3h-4zM6 1h4v3h-4zM12 1h4v3h-4zM18 1h4v3h-4zM0 6h4v3h-4zM6 6h4v3h-4zM0 11h4v3h-4zM0 15h4v3h-4z" /></svg>
      <VLine className="ml-[10px] h-[24px]" />
      <Burger w={22} c="#444" className="ml-[8px]" />
    </div>
  );
}

/* ------------------------------ browser panel ------------------------------ */
const glyphs = {
  act: <path d="M6 4h9v6H6zM6 7h9" fill="#dce8fa" stroke="#5b82cc" strokeWidth="1.300" />,
  use: <path d="M4 7L8 4.500H14L18 7L14 9.500H8Z" fill="#0a0af5" />,
  state: <g fill="#5b82cc"><path d="M3 3h6v4H3zM13 3h6v4h-6zM9 8h4v3H9z" /><path d="M6 7V9.500H16V7" fill="none" stroke="#5b82cc" /></g>,
  comp: <path d="M6 4h9v6H6zM4 5.500h4M4 8.500h4" fill="#f0e0f2" stroke="#c08fc8" strokeWidth="1.300" />,
  dep: <path d="M6 5L8 3.500H15V8L13 10H6Z" fill="#777" stroke="#555" />,
};
const tree = [["Activity Model", 105, "act"], ["Use Case Model", 115, "use"], ["Class Model", 87, "act", 1], ["Statechart Model", 124, "state", 1], ["Component Model", 139, "comp"], ["Sequence Model", 121, "comp"], ["Deployment Model", 140, "dep"]];
const TreeGlyph = ({ c = "#555", b = "#5b82cc", f = "#fff" }) => (
  <svg width="22" height="17" viewBox="0 0 22 17" className="shrink-0" fill={f} stroke={c} strokeWidth="1.400"><path d="M8 4H14M11 4V13H14" fill="none" /><rect x="1" y="1" width="7" height="6" /><rect x="14" y="1" width="7" height="6" /><rect x="14" y="10" width="7" height="6" /><path d="M1 1.500H8M14 10.500H21" stroke={b} strokeWidth="2" /></svg>
);
function BrowserPanel() {
  return (
    <div className="flex w-[371px] shrink-0 flex-col bg-[#fdfdfd] text-[13px] leading-[18px] text-[#4a4a4a]">
      <div className="flex h-[39px] shrink-0 items-center bg-[#e6e6e6]">
        <Fit w={93} className="ml-[6px] -translate-y-px text-[20.5px] leading-[26px]">Browser</Fit>
        <Tri className="ml-[199px]" w={12} h={6} fill="#666" />
        <Pin className="ml-[15px]" />
        <X s={11} c="#666" className="ml-[15px]" sw={1.5} />
      </div>
      <div className="flex h-[27px] shrink-0 items-center bg-[#eee]">
        <svg width="22" height="17" viewBox="0 0 22 17" className="ml-[8px] shrink-0"><path d="M1 16V5H8L10 3H21V16Z" fill="#f6cfa8" stroke="#c48a4a" strokeWidth="1.400" /><circle cx="5.500" cy="4.500" r="3.500" fill="#fff" stroke="#b8a800" strokeWidth="2" /></svg>
        <svg width="22" height="17" viewBox="0 0 22 17" className="ml-[9px] shrink-0"><path d="M1 16V5H3L5 2H10L12 5H21V16Z" fill="#f6cfa8" stroke="#c48a4a" strokeWidth="1.400" /></svg>
        <div className="ml-[9px]"><TreeGlyph /></div>
        <VLine className="ml-[9px] h-[23px]" />
        <svg width="13" height="13" viewBox="0 0 13 13" className="ml-[12px] shrink-0"><path d="M6.500 0L13 6H9V13H4V6H0Z" fill="#8886da" /></svg>
        <svg width="13" height="13" viewBox="0 0 13 13" className="ml-[19px] shrink-0"><path d="M6.500 13L13 7H9V0H4V7H0Z" fill="#8886da" /></svg>
        <VLine className="ml-[14px] h-[23px]" />
        <svg width="17" height="18" viewBox="0 0 17 18" className="ml-[11px] shrink-0"><path d="M3 8A5.500 5 0 1 1 13 6" fill="none" stroke="#777" strokeWidth="2" /><path d="M6 4H9V9L16 11V17H7L1 11L6 12Z" fill="#8886da" /></svg>
        <Burger w={23} c="#666" className="ml-[13px]" />
        <Tri className="ml-[8px]" w={7} h={4} fill="#666" />
        <Tri dir="right" w={11} h={15} fill="#8886da" className="ml-[92px]" />
      </div>
      <div className="flex h-[31px] shrink-0 items-end border-b border-[#c8c8c8] bg-[#e6e6e6]">
        <div className="-mb-px flex h-[29px] w-[66px] shrink-0 items-center border-t border-r border-[#bbb] bg-[#fdfdfd]"><Fit w={48} className="ml-[9px]">Project</Fit></div>
        <div className="flex h-[29px] items-center">
          <Fit w={56} className="ml-[9px]">Context</Fit><Fit w={60} className="ml-[18px]">Diagram</Fit><Fit w={57} className="ml-[18px]">Element</Fit>
        </div>
      </div>
      <div className="flex h-[23.500px] shrink-0 items-center">
        <Tri dir="corner" w={11} h={9} fill="#444" className="mt-[3px] ml-[14px]" />
        <svg width="20" height="17" viewBox="0 0 20 17" className="mb-[5px] ml-[11px] shrink-0"><path d="M3 6V3H5L6 1H13L14 3H17V6" fill="#fff" stroke="#c48a4a" strokeWidth="1.400" /><rect x=".7" y="6" width="18.600" height="10" fill="#9dbfdf" stroke="#7fa6cc" /><path d="M7 10H13" stroke="#fff" strokeWidth="2" /></svg>
        <Fit w={47} className="ml-[15px] -translate-y-px">Model</Fit>
      </div>
      {tree.map(([t, w, g, lock]) => (
        <div key={t} className={"flex h-[22.500px] shrink-0 items-center " + (g === "use" ? "bg-[#f0f0f0]" : "")}>
          <Tri dir="right" w={8} h={11} fill="#fff" stroke="#777" className="mt-[3px] ml-[49px]" />
          <svg width="28" height="17" viewBox="0 0 28 17" className="mb-[3px] ml-[12px] shrink-0">
            <rect x="1" y="1" width="20" height="12.500" fill="#fdf3ea" stroke="#c99660" strokeWidth="1.600" />{glyphs[g]}
            {lock && <path d="M17 16V13H20V11H23V8.500H26V16Z" fill="#b02525" stroke="#5a0a0a" />}
          </svg>
          <Fit w={w} className="ml-[6px] -translate-y-px">{t}</Fit>
        </div>
      ))}
    </div>
  );
}

/* ------------------------------ diagram ------------------------------ */
const nodes = [
  [932, 390, 84, 46, [["Ñòðàíèöà ¹10, ôîðìèðîâàíèå", 871, 991, 376], ["ôèíàíñîâîãî îò÷¸òà ïî çàêàçàì è", 866, 997, 386], ["ñîõðàíåíèå èõ â áàçó äàííûõ", 869, 993, 396.5], ["ôèíàíñîâûõ îò÷¸òîâ", 891, 972, 407]]],
  [692.5, 466, 57, 31, [["Ñòðàíèöà ¹9", 665, 719, 451], ["ìåíåäæåðà, êðàòêàÿ", 647, 738, 461.5], ["èíôîðìàöèÿ îá", 664, 722, 472], ["îïëà÷åííûõ çàêàçàõ", 649, 733, 483]]],
  [1006, 508, 54.5, 30, [["Ñòðàíèöà ¹7", 979, 1033, 493], ["äèðåêòîðà,", 980, 1030, 503.5], ["ôèíàíñîâûé îò÷¸ò î", 966, 1045, 513.5], ["ïîñëåäíèõ 20 çàêàçàõ", 959, 1053, 523.5]]],
  [1179.5, 510, 64, 35, [["Ñòðàíèöà ¹8, ôèíàíñîâûé", 1127, 1233, 501], ["îò÷¸ò, ñîçäàííûé", 1145, 1214, 511], ["ìåíåäæåðàìè çà âñ¸ âðåìÿ", 1124, 1236, 521.5]]],
  [1343, 426, 51.5, 28, [["Ãåíåðàöèÿ îò÷¸òà îá", 1299, 1389, 422], ["îïëàòå", 1329, 1357, 432]]],
  [665, 633, 42, 23, [["Ñòðàíèöà ¹9,", 636, 692, 628], ["îòêðûòèå çàêàçà", 627, 702, 638.5]]],
  [774, 655, 41, 23, [["Ñòðàíèöà ¹9,", 745, 802, 651], ["çàêðûòèå çàêàçà", 736, 812, 661]]],
  [867, 698, 45.5, 24.5, [["Ñòðàíèöà ¹4,", 839, 895, 683.5], ["äîáàâëåíèå", 843, 892, 694.5], ["àêñåññóàðà â", 836, 899, 705], ["êîðçèíó", 851, 883, 715]]],
  [963, 634, 45, 24, [["Âûõîä èç ñèñòåìû", 925, 1003, 634]]],
  [1098, 612, 44, 24, [["Ñòðàíèöà ¹6,", 1070, 1127, 608], ["êîðçèíà", 1082, 1114, 618]]],
  [925.5, 786.5, 81.5, 44, [["Ñòðàíèöà ¹4 ñàéòà", 883, 968, 771.5], ["àâòîðèçèðîâàííîãî ïîëüçîâàòåëÿ,", 855, 994, 782.5], ["îòîáðàæåíèå òåêóùåãî çàêàçà è", 853, 996, 793], ["ñïèñêà ïðîäàâàåìûõ àêñåññóàðîâ", 852, 998, 803]]],
  [1225.5, 593, 53.5, 29, [["Ñòðàíèöà ¹6, Ôîðìà", 1183, 1267, 578.5], ["îôîðìëåíèÿ çàêàçà è", 1182, 1268, 589], ["ââîäà àäðåñà", 1194, 1256, 599], ["äîñòàâêè", 1204, 1246, 610]]],
  [1377.5, 630, 56.5, 31, [["Ñòðàíèöà ¹6,", 1349, 1406, 615.5], ["äîáàâëåíèå àäðåñà", 1335, 1421, 626], ["äîñòàâêè â áàçó äàííûõ", 1325, 1430, 636], ["êëèåíòîâ è çàêàçîâ", 1336, 1420, 646.5]]],
  [1264.5, 691.5, 45.5, 24.5, [["Ñòðàíèöà 6,", 1238, 1292, 677], ["óäàëåíèå", 1243, 1285, 687], ["àêñåññóàðà èç", 1231, 1299, 697], ["êîðçèíû", 1248, 1281, 707.5]]],
  [1293.5, 767, 61.5, 33, [["Ñòðàíèöà ¹5", 1265, 1319, 752.5], ["àäìèíèñòðàòîðà,", 1257, 1329, 762.5], ["óïðàâëåíèå ñàéòîì,", 1252, 1335, 773.5], ["èíôîðìàöèÿ î ïîñåùàåìîñòè", 1238, 1349, 784]]],
  [1432, 543, 33.5, 18, [["Ñòðàíèöà ¹6,", 1403, 1460, 538], ["îïëàòà çàêàçà", 1406, 1461, 549]]],
  [1515, 625.5, 57, 36, [["Ñòðàíèöà ¹5,", 1467, 1524, 610.5], ["àêñåññóàðû,", 1479, 1540, 621], ["ïðîäàâàåìûå", 1474, 1536, 631.5], ["ïðîäàâöîì", 1475, 1530, 642]]],
  [1513, 720, 58, 38, [["Ñòðàíèöà ¹5,", 1462, 1519, 705], ["àêñåññóàðû", 1482, 1540, 715.5], ["ïðîäàâàåìûå", 1469, 1531, 725.5], ["ïðîäàâöîì", 1472, 1527, 735.5]]],
  [1500, 825, 63, 42, [["Ñòðàíèöà ¹5,", 1456, 1513, 815.5], ["àêñåññóàðà â áàçó", 1453, 1535, 826], ["äàííûõ ïðîäàâöà", 1447, 1525, 837.5]]],
  [1502, 528, 10, 11, []],
];
const edges = [
  [752, 448, 850, 417], [1017, 405, 1293, 404], [752, 497, 919, 616], [688, 498, 670, 610], [706, 499, 764, 632],
  [1061, 509, 1115, 511], [1020, 538, 957, 610], [1245, 477, 1293, 452], [1142, 613, 1174, 614], [1142, 632, 1221, 670],
  [1280, 581, 1397, 551], [1280, 605, 1322, 617], [1465, 538, 1494, 534], [938, 741, 958, 658], [991, 743, 1079, 637],
  [897, 741, 882, 722], [1105, 845, 964, 658], [1233, 743, 1009, 651], [1348, 735, 1467, 665], [1357, 752, 1453, 725], [1356, 783, 1440, 808],
];
const dashedOnly = [[1232, 751, 1126, 848], [916, 831, 916, 848]];
const solid = [[675, 384, 687, 435], [888, 507, 952, 507], [1287, 800, 1279, 848], [1007, 817, 1019, 829], [1476, 374, 1497, 443]];
const invokes = [[800, 439], [677, 560.5], [734, 572], [834, 561.5], [1088, 516.5], [1154, 410.5], [1268, 471.5], [989, 580], [946, 707], [890, 740], [1035, 697], [1092, 833.5], [1121, 704], [1339, 572], [1480, 542.5], [1158.5, 620], [1300, 618], [1180.5, 657.5], [1407, 706], [1405, 745.5], [1398, 804]];

function Head([x1, y1, x2, y2]) {
  const a = Math.atan2(y2 - y1, x2 - x1);
  const p = (s) => `${x2 - 14 * Math.cos(a + s)} ${y2 - 12 * Math.sin(a + s)}`;
  return `M${p(0.33)}L${x2} ${y2}L${p(-0.33)}`;
}
const Actor = ({ x, y }) => (
  <g stroke="#b9b9b9" strokeWidth="1.300" fill="none"><ellipse cx={x} cy={y} rx="6.500" ry="5.200" fill="#666" /><path d={`M${x} ${y + 5}V${y + 13}M${x - 7} ${y + 8}H${x + 7}M${x - 6} ${y + 19}L${x} ${y + 13}L${x + 7} ${y + 19}`} /></g>
);
const Lbl = ({ t, x1, x2, y }) => <text x={x1} y={y + 3.5} textLength={x2 - x1} lengthAdjust="spacingAndGlyphs" fontSize="8.500" fontWeight="700" fill="#0a0a0a">{t}</text>;

function Diagram() {
  return (
    <svg width="873" height="518" viewBox="623 328 873 518" className="block shrink-0 bg-[#4d4d4d] font-['Open_Sans',sans-serif]">
      {nodes.map(([cx, cy, rx, ry, lines], i) => (
        <g key={i}>
          <ellipse cx={cx + 1.5} cy={cy + 2} rx={rx} ry={ry} fill="#333" />
          <ellipse cx={cx} cy={cy} rx={rx} ry={ry} fill="#666" stroke="#b5b5b5" strokeWidth="1.200" />
          {lines.map(([t, x1, x2, y]) => <Lbl key={t} t={t} x1={x1} x2={x2} y={y} />)}
        </g>
      ))}
      <g stroke="#b9b9b9" strokeWidth="1.300" fill="none">
        {edges.map((e, i) => <g key={i}><path d={`M${e[0]} ${e[1]}L${e[2]} ${e[3]}`} strokeDasharray="8 3" /><path d={Head(e)} stroke="#d6d6d6" /></g>)}
        {dashedOnly.map((e, i) => <path key={i} d={`M${e[0]} ${e[1]}L${e[2]} ${e[3]}`} strokeDasharray="8 3" />)}
        {solid.map((e, i) => <path key={i} d={`M${e[0]} ${e[1]}L${e[2]} ${e[3]}`} />)}
      </g>
      {invokes.map(([x, y], i) => (
        <g key={i}><rect x={x - 17} y={y - 3.5} width="34" height="7" fill="#4d4d4d" /><text x={x - 16.5} y={y + 2} textLength="33" lengthAdjust="spacingAndGlyphs" fontSize="6" fontWeight="700" fill="#d0d0d0">«invokes»</text></g>
      ))}
      <Actor x={669.5} y={344} /><Lbl t="Ìåíåäæåð" x1={649} x2={691} y={368.5} />
      <Actor x={865} y={491} /><Lbl t="Äèðåêòîð" x1={845} x2={887} y={513} />
      <Actor x={1469} y={337} /><Lbl t="Ïëàò¸æíàÿ ñèñòåìà" x1={1428} x2={1512} y={359.5} />
      <Actor x={1041} y={833} />
      <g transform="translate(1428 408.500) scale(.345 .325)">
        <g fill="none" stroke="#878787" strokeWidth="26">
          <path transform="scale(1 .9)" d="M-84 -88C-60 -140 20 -160 88 -122L86 -86C150 -60 158 30 118 88L84 88C60 140 -20 160 -88 122L-86 86C-150 60 -158 -30 -118 -88Z" />
        </g>
        <g fill="#878787">{[[0, -45], [52, 0], [0, 45], [-52, 0]].map(([x, y]) => <circle key={x + "," + y} cx={x} cy={y} r="50" />)}</g>
        <path d="M-74 -50C-44 -60 -24 -10 0 0S44 56 76 44M46 -76C62 -36 24 -14 0 0S-70 34 -46 78" fill="none" stroke="#4d4d4d" strokeWidth="14" />
      </g>
      <path d="M1391 400L1434 374" stroke="#b9b9b9" strokeWidth="1.200" />
      <g transform="translate(1394 470) rotate(90)" fontFamily="Liberation Sans" fontSize="88" fill="#878787" stroke="#878787">
        <text x="-1" y="0" textLength="209" lengthAdjust="spacingAndGlyphs" fontWeight="bold" strokeWidth="0">TRIAL</text>
        <text x="228" y="0" textLength="215" lengthAdjust="spacingAndGlyphs" strokeWidth="1.500">Edition</text>
      </g>
    </svg>
  );
}

const UseIcon = ({ f = "#f3b9b9", c = "#777" }) => (
  <svg width="23" height="17" viewBox="0 0 23 17" className="shrink-0" fill="none" stroke={c} strokeWidth="1.200"><circle cx="4" cy="4" r="2.500" fill={f} stroke="#222" strokeWidth="1.600" /><path d="M4 6V11M1 8H7M1 14L4 11L7 14" stroke="#333" /><ellipse cx="16.500" cy="4" rx="5" ry="3" fill={f} /><ellipse cx="16.500" cy="13" rx="5" ry="3" fill={f} /></svg>
);
const Dbl = ({ left, className = "" }) => <svg width="14" height="12" viewBox="0 0 14 12" className={"shrink-0 " + className} fill="none" stroke="#111" strokeWidth="2"><path d={left ? "M7 1L2 6L7 11M13 1L8 6L13 11" : "M1 1L6 6L1 11M7 1L12 6L7 11"} /></svg>;
const SBtn = ({ dir, className = "" }) => <div className={"flex shrink-0 items-center justify-center border border-[#c4c4c4] bg-[#fdfdfd] " + className}><Tri dir={dir} w={dir === "up" || dir === "down" ? 12 : 7} h={dir === "up" || dir === "down" ? 6 : 10} fill="#666" /></div>;

function Center() {
  return (
    <div className="flex w-[899px] shrink-0 flex-col border-x border-t border-[#c6c6c6] bg-[#e6e6e6] text-[13px] leading-[18px] text-[#7b7b7b]">
      <div className="flex h-[30px] shrink-0 items-center border-b border-[#cfcfcf]">
        <Dbl className="ml-[7px]" />
        <div className="ml-[39px]"><UseIcon /></div>
        <Fit w={240} className="ml-[29px]">{"Use Case Model.  Use Case Diagram"}</Fit>
        <Dbl left className="ml-[451px]" />
        <Tri className="ml-[27px]" w={11} h={5} fill="#111" />
        <X s={10} c="#111" sw={2} className="ml-[19px]" />
      </div>
      <div className="flex h-[32px] shrink-0 items-center text-[20.5px] leading-[28px] text-[#4a4a4a]">
        <Knot size={24} h={19} color="#3a32e6" inner="#fff" className="ml-[3px]" />
        <Fit w={116} className="ml-[2px] translate-y-px">Start Page</Fit>
        <div className="ml-[19px]"><TreeGlyph c="#8a8a5a" b="#5b6fae" f="#fffff0" /></div>
        <Fit w={140} className="ml-[3px] translate-y-px">Class Model</Fit>
        <div className="ml-[11px] flex h-[32px] w-[263px] shrink-0 items-center border border-b-0 border-[#b8b8b8] bg-[#fdfdfd]">
          <div className="ml-[4px]"><UseIcon f="#c9c9a0" c="#8a8a60" /></div>
          <Fit w={186} className="ml-[3px] translate-y-px">Use Case Model</Fit>
          <X s={10} c="#666" sw={1.6} className="ml-[22px]" />
        </div>
        <Tri dir="left" w={7} h={10} fill="none" stroke="#666" className="mb-[2px] ml-[251px]" />
        <Tri dir="right" w={7} h={10} fill="none" stroke="#666" className="mb-[2px] ml-[17px]" />
      </div>
      <div className="flex h-[518px] shrink-0">
        <Diagram />
        <div className="flex w-[24px] flex-col bg-[#cdcdcd]">
          <SBtn dir="up" className="h-[19px] w-[23px]" />
          <div className="h-[229px] w-[23px] border border-[#bbb] bg-[#fdfdfd]" />
          <SBtn dir="down" className="mt-auto h-[19px] w-[23px]" />
        </div>
      </div>
      <div className="flex min-h-0 flex-1 items-start border-b-2 border-[#cdcdcd] bg-[#cdcdcd] pt-px">
        <SBtn dir="left" className="h-[18px] w-[22px]" />
        <div className="h-[18px] w-[538px] border border-[#bbb] bg-[#fdfdfd]" />
        <SBtn dir="right" className="ml-[290px] h-[18px] w-[22px]" />
      </div>
    </div>
  );
}

/* ------------------------------ right panel ------------------------------ */
const props = [["Na...", 31, "Us...", 30], ["General", 55], ["Type", 30, "Pa...", 28], ["St...", 26, ""], ["Alias", 33, ""], ["Ke...", 28, ""], ["St...", 26, "Pr...", 25], ["Ve...", 28, ""], ["Package", 60], ["URI", 25, ""], ["Vis...", 28, "Pu...", 28]];
function RightPanel() {
  return (
    <div className="flex w-[137px] shrink-0 flex-col bg-[#eee] text-[13px] leading-[18px] text-[#4a4a4a]">
      <div className="flex h-[39px] shrink-0 items-center bg-[#e6e6e6]">
        <Fit w={41} className="ml-[7px] -translate-y-px text-[20.5px] leading-[26px]">Pr...</Fit>
        <Tri className="ml-[15px]" w={12} h={6} fill="#666" />
        <Pin className="ml-[16px]" /><X s={11} c="#666" className="ml-[15px]" sw={1.5} />
      </div>
      <div className="flex h-[27px] shrink-0 items-center">
        <svg width="20" height="16" viewBox="0 0 20 16" className="ml-[9px] shrink-0"><rect width="20" height="16" rx="1" fill="#9c9ad0" /><rect x="4" y="0" width="12" height="7" fill="#e4e4f6" /><rect x="5" y="10" width="10" height="6" fill="#6f6ca8" /><rect x="10" y="11" width="3" height="4" fill="#fff" /></svg>
        <Burger w={18} c="#666" className="ml-[14px]" />
        <Tri className="ml-[11px]" w={7} h={4} fill="#666" />
        <svg width="21" height="17" viewBox="0 0 21 17" className="mb-[2px] ml-[10px] shrink-0"><rect x="1" y="4" width="18" height="12" fill="#f4f8ff" stroke="#2a5fb4" strokeWidth="1.400" /><path d="M1 4H19V7H1Z" fill="#3c7be0" /><path d="M10 7V16" stroke="#2a5fb4" /><path d="M3 7L9 1L20 0V6L12 5L8 9Z" fill="#b5ab4e" stroke="#333" /></svg>
      </div>
      <div className="flex h-[42px] shrink-0 flex-col">
        <div className="flex h-[26px] items-center font-medium"><Fit w={56} className="ml-[10px] text-[#4f6f9a]">Element</Fit><Fit w={30} className="ml-[18px]">Tags</Fit></div>
        <svg width="136" height="9" viewBox="0 0 136 9" className="mt-px"><path d="M0 8.500H29L37 1L44 8.500H136" fill="#f6f6f6" stroke="#b5b5b5" /></svg>
      </div>
      <div className="flex h-[223px] shrink-0 overflow-hidden">
        <div className="w-[114px] shrink-0">
          {props.map(([k, w, v, vw], i) => (
            <div key={i} className="flex h-[21.500px] items-center">
              <div className="flex w-[24px] shrink-0 justify-center pb-px">{v === undefined && <Tri dir="corner" w={7} h={6} fill="#999" className="-ml-px" />}</div>
              {v === undefined ? <Fit w={w} className="ml-[6px] -translate-y-px font-bold">{k}</Fit> : (
                <>
                  <div className="mr-px flex h-[20.500px] w-[44px] items-center bg-[#fdfdfd]"><Fit w={w} className="ml-[6px] -translate-y-px">{k}</Fit></div>
                  <div className="flex h-[20.500px] w-[44px] items-center bg-[#fdfdfd]">{v && <Fit w={vw} className="ml-[6px] -translate-y-px">{v}</Fit>}</div>
                </>
              )}
            </div>
          ))}
        </div>
        <div className="flex w-[23px] shrink-0 flex-col bg-[#cdcdcd]">
          <SBtn dir="up" className="h-[19px] w-[22px]" />
          <div className="h-[110px] w-[22px] border border-[#bbb] bg-[#fdfdfd]" />
          <SBtn dir="down" className="mt-auto h-[18px] w-[22px]" />
        </div>
      </div>
      <div className="h-[7px] shrink-0 bg-[#cdcdcd]" />
      <div className="flex h-[39px] shrink-0 items-center bg-[#e6e6e6]">
        <Fit w={35} className="ml-[7px] -translate-y-px text-[20.5px] leading-[26px]">N...</Fit>
        <Tri className="ml-[21px]" w={12} h={6} fill="#666" />
        <Pin className="ml-[16px]" /><X s={11} c="#666" className="ml-[15px]" sw={1.5} />
      </div>
      <div className="flex h-[27px] shrink-0 items-center font-['Liberation_Serif',serif] text-[18px] leading-[20px] text-[#444]">
        <span className="ml-[14px] w-[14px] font-bold">B</span><span className="ml-[18px] w-[10px] italic">I</span><span className="ml-[17px] w-[14px] underline underline-offset-2">U</span>
        <svg width="22" height="18" viewBox="0 0 22 18" className="ml-[16px] shrink-0"><text x="0" y="11" fontSize="13" fontWeight="bold" fontFamily="Open Sans" fill="#111">A</text><path d="M0 13H21V18H0Z" fill="#000" /><path d="M9 1h4v4h-4z" fill="#e030d0" /><path d="M14 1h5v4h-5z" fill="#e8d820" /><path d="M12 5h6v5h-6z" fill="#20c8d8" /></svg>
        <i className="ml-[9px] block h-[2px] w-[3px] bg-[#666]" />
      </div>
      <div className="flex-1 bg-[#fdfdfd]" />
    </div>
  );
}

function StatusBar() {
  return (
    <div className="flex h-[27px] shrink-0 items-center border-t border-b border-[#cfcfcf] bg-[#f0f0f0] pb-[2px] text-[13px] leading-[18px] text-[#505050]">
      <Fit w={249} className="ml-[3px]">Use Case Diagram:Use Case Model:</Fit>
      <Fit w={122} className="ml-[14px]">created: 9/4/2018</Fit>
      <Fit w={232} className="ml-[8px]">modified: 9/21/2019 11:15:28 AM</Fit>
      <Fit w={29} className="ml-[13px]">50%</Fit>
      <Fit w={74} className="ml-[13px]">827 x 1169</Fit>
      <Fit w={108} className="ml-[51px] font-medium">All Perspectives</Fit>
      <VLine className="ml-[37px] h-[10px]" />
      <div className="ml-[29px] h-[2px] w-[12px] shrink-0 bg-[#999]" />
      <div className="ml-[10px] h-[16px] w-[7px] shrink-0 border border-[#999] bg-[#f4f4f4]" />
      <div className="h-[2px] w-[116px] shrink-0 bg-[#c4c4c4]" />
      <svg width="11" height="10" viewBox="0 0 11 10" className="ml-[16px] shrink-0"><path d="M5.500 0V10M0 5H11" stroke="#999" strokeWidth="2" /></svg>
      <div className="flex text-[#b2b2b2]"><Fit w={29} className="ml-[20px]">CAP</Fit><Fit w={36} className="ml-[25px]">NUM</Fit><Fit w={35} className="ml-[28px]">SCRL</Fit><Fit w={51} className="ml-[28px]">CLOUD</Fit></div>
    </div>
  );
}

function Taskbar() {
  const line = { fill: "none", stroke: "#e8e8e8", strokeWidth: 1.5 };
  return (
    <div className="flex h-[45px] shrink-0 items-center bg-[#060a10] text-[13.5px] leading-[20px] text-[#e6e6e6]">
      <div className="flex w-[66px] shrink-0 justify-center"><svg width="23" height="19" viewBox="0 0 23 19" fill="#fff"><path d="M0 3L9.500 1.500V9H0ZM11 1.300L23 0V9H11ZM0 10H9.500V17.500L0 16ZM11 10H23V19L11 17.700Z" /></svg></div>
      <div className="flex h-full w-[445px] shrink-0 items-center bg-[#f0f0f0] text-[17px] leading-[24px] text-[#404040]">
        <div className="ml-[13px] h-[24px] w-[30px] shrink-0 rounded-[50%] border-[3px] border-[#151515]" />
        <Fit w={177} className="ml-[14px]">Type here to search</Fit>
        <svg width="17" height="18" viewBox="0 0 17 18" className="ml-[174px] shrink-0" fill="none" stroke="#333" strokeWidth="1.400"><rect x="5" y="1" width="7" height="11" rx="1.500" /><path d="M1 8V14H16V8M8.500 14V17M5 17H12" /></svg>
      </div>
      <svg width="25" height="18" viewBox="0 0 25 18" className="ml-[22px] shrink-0" {...line}><path d="M1 1V3H16V1M1 17V14H16V17M2 6H15V11H2ZM21 1V5M21 9V17" /><circle cx="21" cy="7" r="1.800" fill="#fff" /></svg>
      <svg width="28" height="24" viewBox="0 0 28 24" className="ml-[44px] shrink-0"><path d="M0 11C2 3 8 0 15 0C23 0 28 5 28 11V14H9C9 19 14 20 17 20C21 20 24 19 26 18V22C24 23 20 24 16 24C8 24 4 20 4 15C4 11 6 8 10 6C5 6 2 8 0 11ZM10 10H19C19 7 17 5 15 5C12 5 10 7 10 10Z" fill="#0b7bdc" /></svg>
      <svg width="31" height="22" viewBox="0 0 31 22" className="ml-[38px] shrink-0"><path d="M0 20V1H13L15 3H31V20Z" fill="#f7dc82" /><path d="M6 21V12Q6 10 9 10H23Q26 10 26 12V21H20V16H12V21Z" fill="#3aa9dd" /><path d="M0 1H13L15 3H0Z" fill="#eab93c" /></svg>
      <svg width="33" height="27" viewBox="0 0 33 27" className="mb-[2px] ml-[35px] shrink-0"><path d="M10 8V4Q10 1 16.500 1T23 4V8" fill="none" stroke="#ddd" strokeWidth="1.500" /><path d="M0 7H33V24Q33 26 31 26H2Q0 26 0 24Z" fill="#fff" /><path d="M9 10h6.500v5H9z" fill="#f04f23" /><path d="M17.500 10H24v5h-6.500z" fill="#7fb900" /><path d="M9 17h6.500v6H9z" fill="#00a3ee" /><path d="M17.500 17H24v6h-6.500z" fill="#feb800" /></svg>
      <svg width="34" height="22" viewBox="0 0 34 22" className="ml-[36px] shrink-0"><path d="M0 7L17 0L34 7V22H0Z" fill="#fff" /><path d="M2 7H31L18 12L28 18L13 12Z" fill="#060a10" /></svg>
      <div className="ml-[18px] flex h-full w-[67px] shrink-0 items-center justify-center border-b-2 border-[#6cb5ec] bg-[#393c41]"><Knot size={33} h={27} color="#1c14e8" inner="#e8e8ff" /></div>
      <svg width="20" height="18" viewBox="0 0 20 18" className="ml-[79px] shrink-0" {...line}><circle cx="14" cy="4" r="3.300" /><circle cx="7" cy="9" r="3" /><path d="M1 17C1 13 4 12 7 12S12 14 12 17M11 9C16 7 19 9 19 12" /></svg>
      <svg width="17" height="9" viewBox="0 0 17 9" className="ml-[32px] shrink-0" {...line}><path d="M1 8L8.500 1L16 8" /></svg>
      <svg width="24" height="13" viewBox="0 0 24 13" className="ml-[13px] shrink-0"><path d="M3 12C-1 11 0 6 4 6C6 0 14 -1 17 4C23 4 25 10 21 12Z" fill="#e6e6e6" /></svg>
      <svg width="22" height="14" viewBox="0 0 22 14" className="ml-[10px] shrink-0" {...line}><path d="M6 3H19V12H7M20 6V9M1 3H7V6Q7 8 4 8T1 6ZM2 0V3M6 0V3M4 8V12" /><path d="M9 5H14V10H9Z" fill="#e8e8e8" /></svg>
      <svg width="24" height="16" viewBox="0 0 24 16" className="ml-[10px] shrink-0" {...line}><path d="M8 2H23V11H5V6M11 15H18M14.500 11V15M1 1H6V5H1Z" /></svg>
      <svg width="21" height="13" viewBox="0 0 21 13" className="ml-[10px] shrink-0" {...line}><path d="M1 4H4L9 0V13L4 9H1ZM13 4L19 10M19 4L13 10" /></svg>
      <Fit w={32} className="ml-[16px] -translate-y-px">ENG</Fit>
      <div className="ml-[18px] flex w-[72px] shrink-0 -translate-y-px flex-col items-center"><Fit w={66}>11:34 PM</Fit><Fit w={72}>9/25/2019</Fit></div>
      <svg width="35" height="28" viewBox="0 0 35 28" className="ml-[25px] shrink-0"><path d="M0 0H23V15H16L10 20V15H0Z" fill="#fff" /><path d="M4 4H19M4 7.500H19M4 11H14" stroke="#222" strokeWidth="1.300" /><ellipse cx="22.500" cy="19" rx="11" ry="8.800" fill="#26292d" stroke="#888" strokeWidth="1.300" /><text x="22.500" y="23.500" fontSize="13" fontWeight="600" textAnchor="middle" fill="#eee">1</text></svg>
      <div className="ml-[16px] h-full w-px bg-[#555]" />
    </div>
  );
}

function VmWindow() {
  return (
    <div className="absolute top-[43px] left-[242px] flex h-[896px] w-[1424px] flex-col rounded-t-[7px] font-['Open_Sans',sans-serif] shadow-[0_10px_28px_4px_rgba(0,0,0,0.45)]">
      <div className="flex h-[30px] shrink-0 items-center rounded-t-[7px] border-t border-[#6d6a60] bg-linear-to-b from-[#56534a] to-[#403e39] pb-[2px] font-['Noto_Sans',sans-serif] text-[14px] leading-[20px] font-bold text-[#dfdbd2]">
        <Fit w={326} className="ml-[549px]">Windows 10 [Running] - Oracle VM VirtualBox</Fit>
        <div className="mr-[5px] ml-auto flex gap-[3px]"><WinBtn kind="-" /><WinBtn kind="o" /><WinBtn kind="x" /></div>
      </div>
      <AppHeader />
      <Ribbon />
      <NavBar />
      <div className="flex h-[602px] shrink-0 bg-[#e6e6e6]">
        <BrowserPanel />
        <div className="flex w-[9px] shrink-0 justify-center"><div className="w-[5px] bg-[#d4d4d4]" /></div>
        <Center />
        <div className="flex w-[8px] shrink-0 justify-center"><div className="w-[4px] bg-[#d4d4d4]" /></div>
        <RightPanel />
      </div>
      <StatusBar />
      <Taskbar />
      <svg className="absolute top-[532px] right-0" width="4" height="20" viewBox="0 0 4 20"><path d="M4 19H1V1L4 4" fill="#fff" stroke="#111" strokeWidth="1.500" /></svg>
    </div>
  );
}

export default function App() {
  return (
    <div className="relative flex h-[1080px] w-[1920px] flex-col overflow-hidden bg-white">
      <TopBar />
      <TabStrip />
      <AddressBar />
      <GithubPage />
      <Dock />
      <VmWindow />
    </div>
  );
}
